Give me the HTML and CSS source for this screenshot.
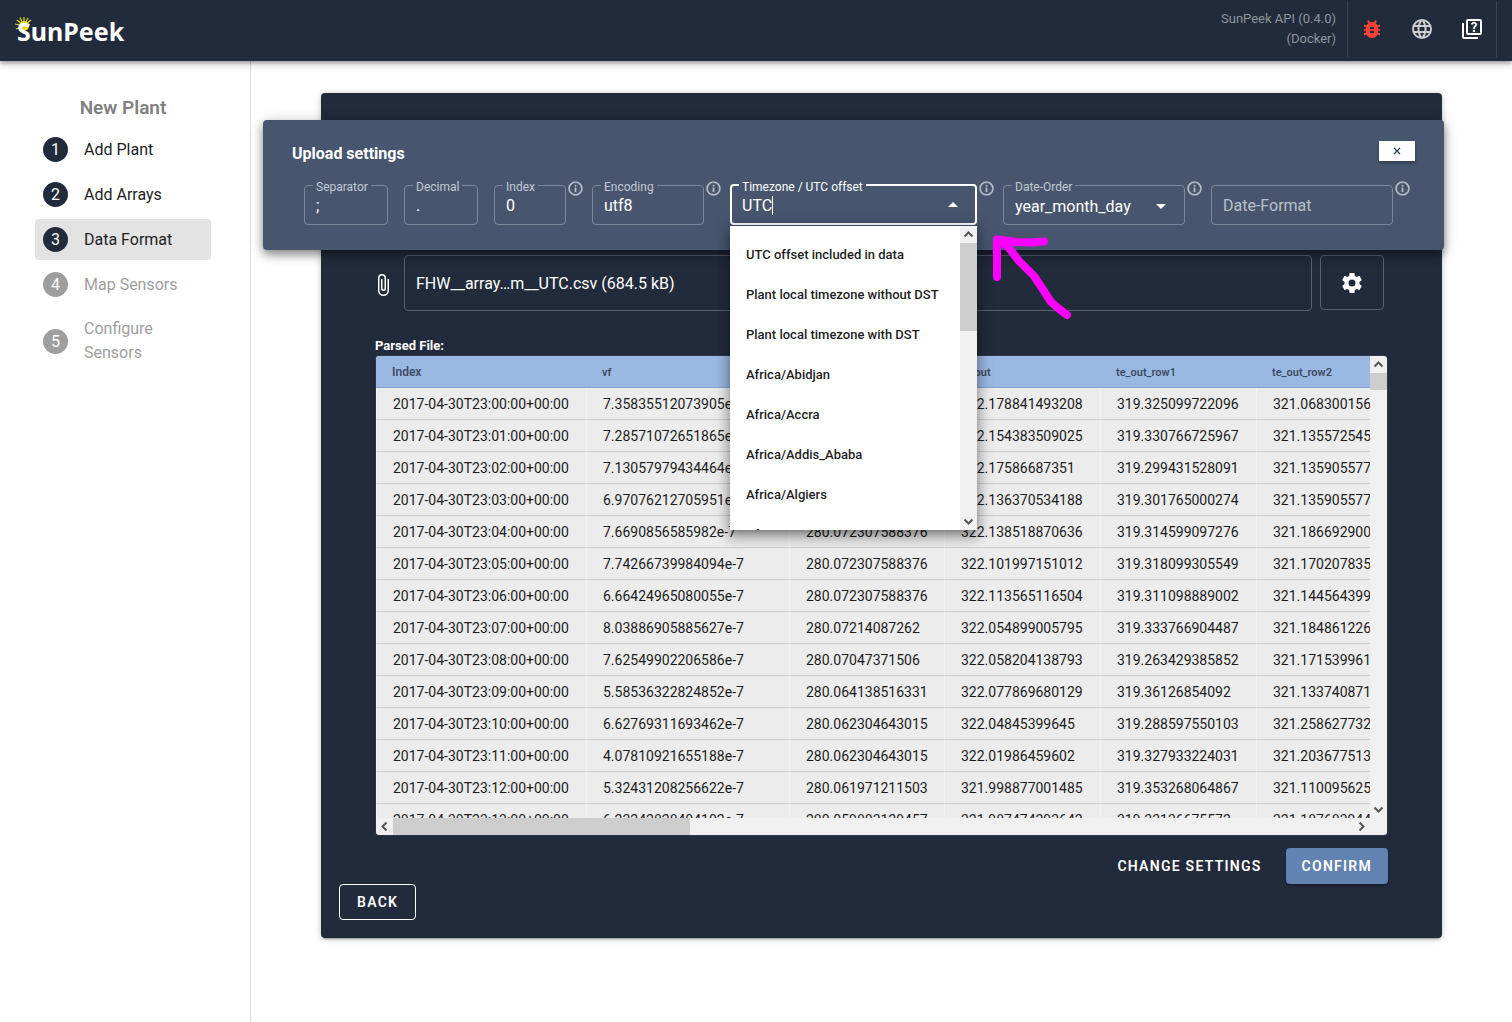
FILE: index.html
```html
<!DOCTYPE html>
<html lang="en">
<head>
<meta charset="utf-8">
<title>SunPeek</title>
<link rel="stylesheet" href="styles.css">
</head>
<body>
<svg class="sprite" aria-hidden="true">
  <symbol id="info" viewBox="0 0 24 24"><path d="M11,9H13V7H11M12,20C7.59,20 4,16.41 4,12C4,7.59 7.59,4 12,4C16.41,4 20,7.59 20,12C20,16.41 16.41,20 12,20M12,2A10,10 0 0,0 2,12A10,10 0 0,0 12,22A10,10 0 0,0 22,12A10,10 0 0,0 12,2M11,17H13V11H11V17Z" fill-rule="evenodd" stroke="currentColor" stroke-width=".4"/></symbol>
  <symbol id="chevron" viewBox="0 0 17 17"><path d="M4.500 10.500L8.500 6.500L12.500 10.500" fill="none" stroke="#555" stroke-width="2"/></symbol>
</svg>

<header class="topbar">
  <a class="logo" href="#">
    <svg class="logo-sun" viewBox="0 0 18 18" width="18" height="18" aria-hidden="true"><circle cx="9" cy="10" r="5" fill="#e6dc1e"/><path d="M9 10V1M9 10L5 1.500M9 10L13 2M9 10L16 4M9 10L2 4M9 10L0 8M9 10L1 13" stroke="#e6dc1e" stroke-width="1.200"/></svg>
    <span>SunPeek</span>
  </a>
  <p class="api">SunPeek API (0.4.0)<br>(Docker)</p>
  <nav class="tools">
    <a href="#" aria-label="Report a bug" class="bug"><svg viewBox="0 0 24 24"><path d="M14,12H10V10H14M14,16H10V14H14M20,8H17.19C16.74,7.22 16.12,6.55 15.37,6.04L17,4.41L15.59,3L13.42,5.17C12.96,5.06 12.5,5 12,5C11.5,5 11.04,5.06 10.59,5.17L8.41,3L7,4.41L8.62,6.04C7.88,6.55 7.26,7.22 6.81,8H4V10H6.09C6.04,10.33 6,10.66 6,11V12H4V14H6V15C6,15.34 6.04,15.67 6.09,16H4V18H6.81C7.85,19.79 9.78,21 12,21C14.22,21 16.15,19.79 17.19,18H20V16H17.91C17.96,15.67 18,15.34 18,15V14H20V12H18V11C18,10.66 17.96,10.33 17.91,10H20V8Z" fill-rule="evenodd"/></svg></a>
    <a href="#" aria-label="Website" class="web"><svg viewBox="0 0 24 24"><path fill-rule="evenodd" d="M16.36,14C16.44,13.34 16.5,12.68 16.5,12C16.5,11.32 16.44,10.66 16.36,10H19.74C19.9,10.64 20,11.31 20,12C20,12.69 19.9,13.36 19.74,14M14.59,19.56C15.19,18.45 15.65,17.25 15.97,16H18.92C17.96,17.65 16.43,18.93 14.59,19.56M14.34,14H9.66C9.56,13.34 9.5,12.68 9.5,12C9.5,11.32 9.56,10.65 9.66,10H14.34C14.43,10.65 14.5,11.32 14.5,12C14.5,12.68 14.43,13.34 14.34,14M12,19.96C11.17,18.76 10.5,17.43 10.09,16H13.91C13.5,17.43 12.83,18.76 12,19.96M8,8H5.08C6.03,6.34 7.57,5.06 9.4,4.44C8.8,5.55 8.35,6.75 8,8M5.08,16H8C8.35,17.25 8.8,18.45 9.4,19.56C7.57,18.93 6.03,17.65 5.08,16M4.26,14C4.1,13.36 4,12.69 4,12C4,11.31 4.1,10.64 4.26,10H7.64C7.56,10.66 7.5,11.32 7.5,12C7.5,12.68 7.56,13.34 7.64,14M12,4.03C12.83,5.23 13.5,6.57 13.91,8H10.09C10.5,6.57 11.17,5.23 12,4.03M18.92,8H15.97C15.65,6.75 15.19,5.55 14.59,4.44C16.43,5.07 17.96,6.34 18.92,8M12,2A10,10 0 1,0 22,12A10,10 0 0,0 12,2Z"/></svg></a>
    <a href="#" aria-label="Documentation" class="docs"><svg viewBox="0 0 24 24"><path fill-rule="evenodd" d="M4,6H2V20A2,2 0 0,0 4,22H18V20H4V6M20,2H8A2,2 0 0,0 6,4V16A2,2 0 0,0 8,18H20A2,2 0 0,0 22,16V4A2,2 0 0,0 20,2M20,16H8V4H20V16Z"/><path stroke="currentColor" stroke-width=".4" d="M13.51 10.16c.41-.73 1.18-1.16 1.63-1.8.48-.68.21-1.94-1.14-1.94-.88 0-1.32.67-1.5 1.23l-1.37-.57C11.51 5.96 12.52 5 13.99 5c1.23 0 2.08.56 2.51 1.26.37.6.58 1.73.01 2.57-.63.93-1.23 1.21-1.56 1.81-.13.24-.18.4-.18 1.18h-1.52c.01-.41-.06-1.08.26-1.66zM12.95 13.950c0-.59.47-1.04 1.050-1.040.59 0 1.040.45 1.040 1.040 0 .58-.44 1.050-1.040 1.050-.58 0-1.050-.47-1.050-1.050z"/></svg></a>
  </nav>
</header>

<div class="layout">
  <aside class="sidebar">
    <h2>New Plant</h2>
    <ol class="steps">
      <li><a class="step" href="#"><span class="num">1</span><span>Add Plant</span></a></li>
      <li><a class="step" href="#"><span class="num">2</span><span>Add Arrays</span></a></li>
      <li><a class="step current" href="#" aria-current="step"><span class="num">3</span><span>Data Format</span></a></li>
      <li><a class="step pending" href="#"><span class="num">4</span><span>Map Sensors</span></a></li>
      <li><a class="step pending" href="#"><span class="num">5</span><span>Configure Sensors</span></a></li>
    </ol>
  </aside>

  <main class="main">
    <section class="card">
      <div class="card-body">
        <div class="file-row">
          <svg class="clip" viewBox="0 0 24 24" aria-hidden="true"><path d="M16.5,6V17.5A4,4 0 0,1 12.5,21.5A4,4 0 0,1 8.5,17.5V5A2.5,2.5 0 0,1 11,2.5A2.5,2.5 0 0,1 13.5,5V15.5A1,1 0 0,1 12.5,16.5A1,1 0 0,1 11.5,15.5V6H10V15.5A2.5,2.5 0 0,0 12.5,18A2.5,2.5 0 0,0 15,15.5V5A4,4 0 0,0 11,1A4,4 0 0,0 7,5V17.5A5.5,5.5 0 0,0 12.5,23A5.5,5.5 0 0,0 18,17.5V6H16.5Z"/></svg>
          <button class="file" type="button">FHW__array…m__UTC.csv (684.5 kB)</button>
          <button class="gear" type="button" aria-label="Upload settings"><svg viewBox="0 0 24 24"><path d="M12,15.5A3.5,3.5 0 0,1 8.5,12A3.5,3.5 0 0,1 12,8.5A3.5,3.5 0 0,1 15.5,12A3.5,3.5 0 0,1 12,15.5M19.43,12.97C19.47,12.65 19.5,12.33 19.5,12C19.5,11.67 19.47,11.34 19.43,11L21.54,9.37C21.73,9.22 21.78,8.95 21.66,8.73L19.66,5.27C19.54,5.05 19.27,4.96 19.05,5.05L16.56,6.05C16.04,5.66 15.5,5.32 14.87,5.07L14.5,2.42C14.46,2.18 14.25,2 14,2H10C9.75,2 9.54,2.18 9.5,2.42L9.13,5.07C8.5,5.32 7.96,5.66 7.44,6.05L4.95,5.05C4.73,4.96 4.46,5.05 4.34,5.27L2.34,8.73C2.21,8.95 2.27,9.22 2.46,9.37L4.57,11C4.53,11.34 4.5,11.67 4.5,12C4.5,12.33 4.53,12.65 4.57,12.97L2.46,14.63C2.27,14.78 2.21,15.05 2.34,15.27L4.34,18.73C4.46,18.95 4.73,19.03 4.95,18.95L7.44,17.94C7.96,18.34 8.5,18.68 9.13,18.93L9.5,21.58C9.54,21.82 9.75,22 10,22H14C14.25,22 14.46,21.82 14.5,21.58L14.87,18.93C15.5,18.67 16.04,18.34 16.56,17.94L19.05,18.95C19.27,19.03 19.54,18.95 19.66,18.73L21.66,15.27C21.78,15.05 21.73,14.78 21.54,14.63L19.43,12.97Z" fill-rule="evenodd"/></svg></button>
        </div>

        <h3 id="parsed">Parsed File:</h3>
        <div class="grid">
          <div class="viewport">
            <table aria-labelledby="parsed">
              <colgroup><col class="c-index"><col class="c-vf"><col class="c-in"><col class="c-out"><col class="c-out"><col class="c-out"></colgroup>
              <thead><tr><th class="first">Index</th><th>vf</th><th>te_in</th><th>te_out</th><th>te_out_row1</th><th>te_out_row2</th></tr></thead>
              <tbody>
                <tr><td>2017-04-30T23:00:00+00:00</td><td>7.35835512073905e-7</td><td>280.072307588376</td><td>322.178841493208</td><td>319.325099722096</td><td>321.068300156</td></tr>
                <tr><td>2017-04-30T23:01:00+00:00</td><td>7.28571072651865e-7</td><td>280.072307588376</td><td>322.154383509025</td><td>319.330766725967</td><td>321.135572545</td></tr>
                <tr><td>2017-04-30T23:02:00+00:00</td><td>7.13057979434464e-7</td><td>280.072307588376</td><td>322.17586687351</td><td>319.299431528091</td><td>321.135905577</td></tr>
                <tr><td>2017-04-30T23:03:00+00:00</td><td>6.97076212705951e-7</td><td>280.072307588376</td><td>322.136370534188</td><td>319.301765000274</td><td>321.135905577</td></tr>
                <tr><td>2017-04-30T23:04:00+00:00</td><td>7.6690856585982e-7</td><td>280.072307588376</td><td>322.138518870636</td><td>319.314599097276</td><td>321.186692900</td></tr>
                <tr><td>2017-04-30T23:05:00+00:00</td><td>7.74266739984094e-7</td><td>280.072307588376</td><td>322.101997151012</td><td>319.318099305549</td><td>321.170207835</td></tr>
                <tr><td>2017-04-30T23:06:00+00:00</td><td>6.66424965080055e-7</td><td>280.072307588376</td><td>322.113565116504</td><td>319.311098889002</td><td>321.144564399</td></tr>
                <tr><td>2017-04-30T23:07:00+00:00</td><td>8.03886905885627e-7</td><td>280.07214087262</td><td>322.054899005795</td><td>319.333766904487</td><td>321.184861226</td></tr>
                <tr><td>2017-04-30T23:08:00+00:00</td><td>7.62549902206586e-7</td><td>280.07047371506</td><td>322.058204138793</td><td>319.263429385852</td><td>321.171539961</td></tr>
                <tr><td>2017-04-30T23:09:00+00:00</td><td>5.58536322824852e-7</td><td>280.064138516331</td><td>322.077869680129</td><td>319.36126854092</td><td>321.133740871</td></tr>
                <tr><td>2017-04-30T23:10:00+00:00</td><td>6.62769311693462e-7</td><td>280.062304643015</td><td>322.04845399645</td><td>319.288597550103</td><td>321.258627732</td></tr>
                <tr><td>2017-04-30T23:11:00+00:00</td><td>4.07810921655188e-7</td><td>280.062304643015</td><td>322.01986459602</td><td>319.327933224031</td><td>321.203677513</td></tr>
                <tr><td>2017-04-30T23:12:00+00:00</td><td>5.32431208256622e-7</td><td>280.061971211503</td><td>321.998877001485</td><td>319.353268064867</td><td>321.110095625</td></tr>
                <tr><td>2017-04-30T23:13:00+00:00</td><td>6.23242828404102e-7</td><td>280.059803129457</td><td>321.987474293642</td><td>319.33136675572</td><td>321.187683944</td></tr>
              </tbody>
            </table>
          </div>
          <div class="vbar"><svg class="arrow"><use href="#chevron"/></svg><span class="thumb"></span><svg class="arrow down"><use href="#chevron"/></svg></div>
          <div class="hbar"><svg class="arrow left"><use href="#chevron"/></svg><span class="thumb"></span><svg class="arrow right"><use href="#chevron"/></svg></div>
          <div class="corner"></div>
        </div>

        <div class="actions">
          <button class="btn" type="button">Change settings</button>
          <button class="btn primary" type="button">Confirm</button>
        </div>
      </div>
      <button class="btn outlined" type="button">Back</button>
    </section>

    <section class="dialog" role="dialog" aria-labelledby="dlg-title">
      <div class="dialog-head">
        <h2 id="dlg-title">Upload settings</h2>
        <button class="close" type="button" aria-label="Close"><svg viewBox="0 0 8 8" width="8" height="8"><path d="M1 1L7 7M7 1L1 7" stroke="#2c3e55" stroke-width="1.300"/></svg></button>
      </div>
      <form class="fields">
        <fieldset class="field f-sep"><legend><label for="sep">Separator</label></legend><input id="sep" value=";"></fieldset>
        <fieldset class="field f-dec"><legend><label for="dec">Decimal</label></legend><input id="dec" value="."></fieldset>
        <fieldset class="field f-idx"><legend><label for="idx">Index</label></legend><input id="idx" value="0"></fieldset>
        <svg class="info"><use href="#info"/></svg>
        <fieldset class="field f-enc"><legend><label for="enc">Encoding</label></legend><input id="enc" value="utf8"></fieldset>
        <svg class="info"><use href="#info"/></svg>
        <div class="combo">
          <fieldset class="field active"><legend><label for="tz">Timezone / UTC offset</label></legend>
            <div class="control"><input id="tz" class="typed" value="UTC" role="combobox" aria-expanded="true" aria-controls="tz-list"><span class="caret"></span><svg class="tri" viewBox="0 0 10 5" width="10" height="5"><path d="M0 5L5 0L10 5Z"/></svg></div>
          </fieldset>
          <div class="menu">
            <ul id="tz-list" role="listbox">
              <li role="option">UTC offset included in data</li>
              <li role="option">Plant local timezone without DST</li>
              <li role="option">Plant local timezone with DST</li>
              <li role="option">Africa/Abidjan</li>
              <li role="option">Africa/Accra</li>
              <li role="option">Africa/Addis_Ababa</li>
              <li role="option">Africa/Algiers</li>
              <li role="option">Africa/Asmara</li>
            </ul>
            <div class="vbar tall"><svg class="arrow"><use href="#chevron"/></svg><span class="thumb"></span><svg class="arrow down"><use href="#chevron"/></svg></div>
          </div>
        </div>
        <svg class="info"><use href="#info"/></svg>
        <fieldset class="field f-date"><legend><label for="order">Date-Order</label></legend>
          <div class="control"><select id="order"><option>year_month_day</option></select><svg class="tri" viewBox="0 0 10 5" width="10" height="5"><path d="M0 0L5 5L10 0Z"/></svg></div>
        </fieldset>
        <svg class="info"><use href="#info"/></svg>
        <div class="field plain f-date"><input aria-label="Date-Format" placeholder="Date-Format"></div>
        <svg class="info"><use href="#info"/></svg>
      </form>
    </section>

    <svg class="annotation" viewBox="0 0 90 92" width="90" height="92" aria-hidden="true"><path d="M53 11.600L40 12.500L25 12L6 9.500L6 26L6 47M8 10L18 18L28 31L43 46L51 58L60 72L67 78L76 85" fill="none" stroke="#f0f" stroke-width="8" stroke-linecap="round" stroke-linejoin="round"/></svg>
  </main>
</div>
</body>
</html>
```

FILE: styles.css
```css
* { box-sizing: border-box; }
body { margin: 0; min-height: 100vh; display: flex; flex-direction: column; font-family: Roboto, "Liberation Sans", sans-serif; font-size: 16px; line-height: 24px; color: #1e1e1e; background: #fff; }
h2, h3, p, ol, ul { margin: 0; padding: 0; }
ol, ul { list-style: none; }
a { color: inherit; text-decoration: none; }
button, input, select { font: inherit; color: inherit; margin: 0; }
svg { fill: currentColor; flex: none; }
.sprite { position: absolute; width: 0; height: 0; }

.topbar { position: relative; z-index: 5; display: flex; align-items: center; height: 61px; padding: 0 15px 4px 14px; background: #222b3c; box-shadow: 0 2px 4px rgba(0,0,0,.3), 0 4px 8px rgba(0,0,0,.15); }
.logo { position: relative; margin-right: auto; padding: 4px 4px 0 3px; font: 700 25px/24px "Noto Sans", sans-serif; color: #fff; }
.logo span { position: relative; }
.logo-sun { position: absolute; left: 1px; top: 1px; }
.api { font-size: 13px; line-height: 20px; color: #8f959d; text-align: right; padding-right: 11px; }
.tools { display: flex; align-items: center; gap: 26px; align-self: stretch; margin-top: 1px; padding: 0 12px; border: solid #3b4454; border-width: 0 1px; }
.tools a, .tools svg { display: block; width: 24px; height: 24px; }
.bug { color: #f44336; }
.web { color: #cfcfcf; }
.docs { color: #fff; }

.layout { flex: 1; display: flex; }
.sidebar { flex: none; width: 251px; padding: 35px 39px 0 35px; border-right: 1px solid #dcdcdc; }
.sidebar h2 { margin-bottom: 9px; font-size: 19px; font-weight: 600; text-align: center; color: #808080; }
.steps { display: flex; flex-direction: column; gap: 4px; }
.step { display: flex; align-items: center; gap: 16px; min-height: 41px; padding: 8px; border-radius: 4px; }
.num { flex: none; width: 25px; height: 25px; line-height: 25px; border-radius: 50%; background: #222b3c; color: #fff; text-align: center; }
.current { background: #e3e3e3; }
.pending { color: #9e9e9e; }
.pending .num { background: #9e9e9e; }

.main { position: relative; flex: 1; min-width: 0; padding: 32px 70px; }
.card { padding: 162px 18px 18px; border-radius: 4px; background: #222b3c; color: #fff; box-shadow: 0 3px 2px -2px rgba(0,0,0,.3), 0 1px 6px rgba(0,0,0,.25); }
.card-body { padding: 0 36px; }
.file-row { display: flex; align-items: flex-start; gap: 8px; padding-right: 4px; }
.clip { width: 24px; height: 24px; margin: 18px 1px 0 -4px; }
.file { flex: 1; height: 56px; padding: 2px 11px 0; border: 1px solid #596170; border-radius: 4px; background: none; text-align: left; }
.gear { display: grid; place-items: center; width: 64px; height: 55px; border: 1px solid #596170; border-radius: 4px; background: none; }
.gear svg { width: 24px; height: 24px; }
.card h3 { margin-top: 26px; font-size: 13px; line-height: 18px; font-weight: 700; }

.grid { display: grid; grid-template-columns: minmax(0, 1fr) 17px; grid-template-rows: 462px 17px; border: 1px solid #2d3748; border-radius: 4px; overflow: hidden; }
.viewport { overflow: hidden; background: #ececec; }
table { width: 100%; min-width: 1036px; table-layout: fixed; border-collapse: separate; border-spacing: 0; color: #1c1c1c; font-size: 14px; }
.c-index { width: 210px; }
.c-vf { width: 203px; }
.c-in { width: 155px; }
.c-out { width: 156px; }
th { height: 32px; padding: 2px 16px 0; border-bottom: 1px solid #86a3d0; background: #9bb8e3; color: #3d4c63; font-size: 11px; font-weight: 600; text-align: left; }
th.first { font-size: 12px; padding-top: 0; }
td { height: 32px; padding: 0 16px; border-bottom: 1px solid #cdcdcd; border-left: 1px solid #f2f2f2; white-space: nowrap; }

.vbar { display: flex; flex-direction: column; background: #f0f0f0; }
.hbar { display: flex; background: #f0f0f0; }
.corner { background: #f0f0f0; }
.thumb { background: #cdcdcd; }
.vbar .thumb { height: 17px; }
.tall .thumb { height: 88px; }
.hbar .thumb { width: 297px; }
.arrow { width: 17px; height: 17px; }
.down { margin-top: auto; transform: rotate(180deg); }
.left { transform: rotate(-90deg); }
.right { margin-left: auto; transform: rotate(90deg); }

.actions { display: flex; justify-content: flex-end; gap: 8px; margin-top: 12px; }
.btn { height: 36px; padding: 0 16px; border: 0; border-radius: 4px; background: none; color: #fff; font-size: 14px; font-weight: 600; letter-spacing: .09em; text-transform: uppercase; }
.primary { background: #6282b2; box-shadow: 0 2px 3px rgba(0,0,0,.3); }
.outlined { border: 1px solid #fff; padding: 0 17px; display: block; }

.dialog { position: absolute; left: 12px; right: 68px; top: 59px; height: 130px; padding: 20px 29px; border-radius: 4px; background: #47566e; color: #fff; box-shadow: 0 5px 8px rgba(0,0,0,.35), 0 2px 16px rgba(0,0,0,.2); }
.dialog-head { display: flex; justify-content: space-between; align-items: flex-start; }
.dialog h2 { padding-top: 2px; font-size: 16px; line-height: 24px; font-weight: 700; }
.close { display: grid; place-items: center; width: 36px; height: 20px; margin-top: 1px; padding: 0; border: 0; background: #fff; box-shadow: 0 2px 3px rgba(0,0,0,.3); }
.fields { display: flex; align-items: flex-start; margin-top: 11px; padding: 0 4px 0 12px; }
.field { min-width: 0; height: 48px; margin: 0; padding: 0 8px; border: 1px solid #7b879a; border-radius: 4px; }
.field legend { padding: 4px 3px 0; font-size: 12px; line-height: 12px; color: #c3c9d2; white-space: nowrap; }
.field input, .field select { display: block; width: 100%; height: 25px; padding: 0 3px; border: 0; outline: 0; background: none; color: #fff; appearance: none; }
.field select { height: 28px; }
.f-sep { flex: 84 1 84px; margin-right: 16px; }
.f-dec { flex: 74 1 74px; margin-right: 16px; }
.f-idx { flex: 72 1 72px; }
.f-enc { flex: 112 1 112px; }
.f-date { flex: 182 1 182px; }
.plain { height: 40px; margin-top: 8px; padding-top: 7px; }
.plain input::placeholder { color: #b9c0ca; opacity: 1; }
.info { width: 17px; height: 17px; margin: 3px 8px 0 1px; color: #bcc3cc; }
.info:last-child { margin-right: 0; }
.control { display: flex; align-items: center; }
.tri { margin: 0 10px 2px auto; }
.combo { position: relative; flex: 247 1 247px; min-width: 0; }
.active { padding: 0 7px; border: 2px solid #fff; }
.active legend { color: #fff; }
.field .typed { width: auto; field-sizing: content; padding-right: 0; }
.caret { width: 1px; height: 19px; background: #fff; }

.menu { position: absolute; left: 0; right: 0; top: 49px; display: flex; height: 304px; background: #fff; color: #1e1e1e; box-shadow: 0 5px 5px -3px rgba(0,0,0,.2), 0 8px 10px 1px rgba(0,0,0,.14), 0 3px 14px 2px rgba(0,0,0,.3); }
.menu ul { flex: 1; min-width: 0; padding-top: 9px; overflow: hidden; }
.menu li { padding-left: 16px; font-size: 13px; font-weight: 500; line-height: 40px; white-space: nowrap; }

.annotation { position: absolute; left: 740px; top: 169px; pointer-events: none; }
```
